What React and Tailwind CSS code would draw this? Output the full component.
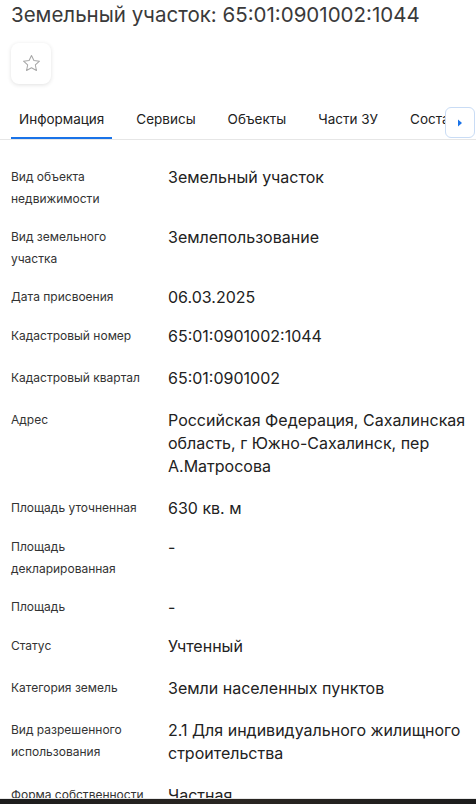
import React from "react";

const rows = [
  { label: "Вид объекта недвижимости", value: "Земельный участок" },
  { label: "Вид земельного участка", value: "Землепользование" },
  { label: "Дата присвоения", value: "06.03.2025" },
  { label: "Кадастровый номер", value: "65:01:0901002:1044", tall: true },
  { label: "Кадастровый квартал", value: "65:01:0901002", tall: true },
  { label: "Адрес", value: "Российская Федерация, Сахалинская область, г Южно-Сахалинск, пер А.Матросова", tall: true },
  { label: "Площадь уточненная", value: "630 кв. м" },
  { label: "Площадь декларированная", value: "-" },
  { label: "Площадь", value: "-" },
  { label: "Статус", value: "Учтенный", tall: true },
  { label: "Категория земель", value: "Земли населенных пунктов", tall: true },
  { label: "Вид разрешенного использования", value: "2.1 Для индивидуального жилищного строительства", tall: true },
  { label: "Форма собственности", value: "Частная" },
];

const tabs = ["Информация", "Сервисы", "Объекты", "Части ЗУ", "Состав"];

const App = () => {
  return (
    <div className="w-full min-h-screen bg-white font-['Inter',sans-serif] text-[#222]">
      <h1 className="px-[11px] text-[20.5px] leading-[30px] text-[#3a3a3a]">
        Земельный участок: 65:01:0901002:1044
      </h1>

      <div className="px-[11px] mt-[13px]">
        <button className="w-[40px] h-[41px] rounded-lg bg-white shadow-[0_1px_4px_rgba(0,0,0,0.12)] flex items-center justify-center">
          <svg width="21" height="21" viewBox="0 0 24 24" fill="none" stroke="#a8a8a8" strokeWidth="1.2" strokeLinejoin="round">
            <path d="M12 2.8l2.75 5.8 6.35.75-4.7 4.35 1.25 6.3L12 16.85 6.35 20l1.25-6.3-4.7-4.35 6.35-.75z" />
          </svg>
        </button>
      </div>

      <div className="relative mt-[13px] border-b border-[#e6e6e6] overflow-hidden">
        <div className="flex gap-4 px-[11px] whitespace-nowrap">
          {tabs.map((t, i) => (
            <div
              key={t}
              className={
                "px-2 pt-[12px] pb-[8px] text-[13.5px] leading-[20px] border-b-2 text-[#222] " +
                (i === 0 ? "border-[#1a73e8]" : "border-transparent")
              }
            >
              {t}
            </div>
          ))}
        </div>
        <button className="absolute right-[1px] top-[10px] w-[30px] h-[31px] rounded-md bg-white border border-[#c9dcf5] flex items-center justify-center">
          <svg width="8" height="10" viewBox="0 0 8 10">
            <path d="M2 1.5L6 5 2 8.5z" fill="#1a73e8" />
          </svg>
        </button>
      </div>

      <div className="pl-[11px] pt-[26px]">
        {rows.map((r) => (
          <div key={r.label} className={"flex " + (r.tall ? "pb-[19px]" : "pb-4")}>
            <div className="w-[157px] shrink-0 pr-[20px] text-[12px] leading-[22px] text-[#333]">
              {r.label}
            </div>
            <div className="flex-1 pr-[4px] text-[16px] leading-[23px] text-[#222]">
              {r.value}
            </div>
          </div>
        ))}
      </div>

      <div className="fixed left-0 right-0 bottom-0 h-[6px] border-t border-[#e8e8e8] bg-gradient-to-r from-[#1c1c1c] via-[#2a2622] to-[#1c1c1c]" />
    </div>
  );
};

export default App;
